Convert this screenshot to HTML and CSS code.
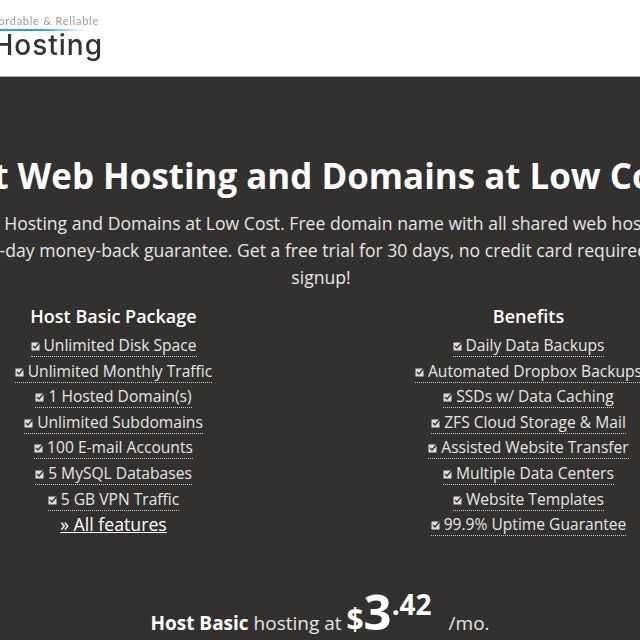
FILE: index.html
```html
<!DOCTYPE html>
<html lang="en">
<head>
    <meta charset="UTF-8">
    <meta name="viewport" content="width=device-width, initial-scale=1.0">
    <title>Web Hosting and Domains at Low Cost</title>
    <link rel="stylesheet" href="styles.css">
</head>
<body>

<header class="site-header">
    <div class="logo">
        <span class="logo-tag">Affordable &amp; Reliable</span>
        <span class="logo-line"></span>
        <span class="logo-name">Hosting</span>
    </div>
</header>

<main class="main">
    <div class="wrap">
        <h1>Best Web Hosting and Domains at Low Cost</h1>
        <p class="intro">
            Best Web Hosting and Domains at Low Cost. Free domain name with all shared web hosting plans.<br>
            30-day money-back guarantee. Get a free trial for 30 days, no credit card required at
            <span class="intro-end">signup!</span>
        </p>

        <div class="packages">
            <section class="package">
                <h3>Host Basic Package</h3>
                <ul>
                    <li><span class="item"><svg class="tick" viewBox="0 0 10 10"><rect x="0.5" y="1.5" width="8" height="8" fill="#ddd"/><path d="M2 5l2 2 5-6" fill="none" stroke="#333" stroke-width="1.4"/></svg>Unlimited Disk Space</span></li>
                    <li><span class="item"><svg class="tick" viewBox="0 0 10 10"><rect x="0.5" y="1.5" width="8" height="8" fill="#ddd"/><path d="M2 5l2 2 5-6" fill="none" stroke="#333" stroke-width="1.4"/></svg>Unlimited Monthly Traffic</span></li>
                    <li><span class="item"><svg class="tick" viewBox="0 0 10 10"><rect x="0.5" y="1.5" width="8" height="8" fill="#ddd"/><path d="M2 5l2 2 5-6" fill="none" stroke="#333" stroke-width="1.4"/></svg>1 Hosted Domain(s)</span></li>
                    <li><span class="item"><svg class="tick" viewBox="0 0 10 10"><rect x="0.5" y="1.5" width="8" height="8" fill="#ddd"/><path d="M2 5l2 2 5-6" fill="none" stroke="#333" stroke-width="1.4"/></svg>Unlimited Subdomains</span></li>
                    <li><span class="item"><svg class="tick" viewBox="0 0 10 10"><rect x="0.5" y="1.5" width="8" height="8" fill="#ddd"/><path d="M2 5l2 2 5-6" fill="none" stroke="#333" stroke-width="1.4"/></svg>100 E-mail Accounts</span></li>
                    <li><span class="item"><svg class="tick" viewBox="0 0 10 10"><rect x="0.5" y="1.5" width="8" height="8" fill="#ddd"/><path d="M2 5l2 2 5-6" fill="none" stroke="#333" stroke-width="1.4"/></svg>5 MySQL Databases</span></li>
                    <li><span class="item"><svg class="tick" viewBox="0 0 10 10"><rect x="0.5" y="1.5" width="8" height="8" fill="#ddd"/><path d="M2 5l2 2 5-6" fill="none" stroke="#333" stroke-width="1.4"/></svg>5 GB VPN Traffic</span></li>
                    <li><a class="all-features" href="#">» All features</a></li>
                </ul>
            </section>
            <section class="package">
                <h3>Benefits</h3>
                <ul>
                    <li><span class="item"><svg class="tick" viewBox="0 0 10 10"><rect x="0.5" y="1.5" width="8" height="8" fill="#ddd"/><path d="M2 5l2 2 5-6" fill="none" stroke="#333" stroke-width="1.4"/></svg>Daily Data Backups</span></li>
                    <li><span class="item"><svg class="tick" viewBox="0 0 10 10"><rect x="0.5" y="1.5" width="8" height="8" fill="#ddd"/><path d="M2 5l2 2 5-6" fill="none" stroke="#333" stroke-width="1.4"/></svg>Automated Dropbox Backups</span></li>
                    <li><span class="item"><svg class="tick" viewBox="0 0 10 10"><rect x="0.5" y="1.5" width="8" height="8" fill="#ddd"/><path d="M2 5l2 2 5-6" fill="none" stroke="#333" stroke-width="1.4"/></svg>SSDs w/ Data Caching</span></li>
                    <li><span class="item"><svg class="tick" viewBox="0 0 10 10"><rect x="0.5" y="1.5" width="8" height="8" fill="#ddd"/><path d="M2 5l2 2 5-6" fill="none" stroke="#333" stroke-width="1.4"/></svg>ZFS Cloud Storage &amp; Mail</span></li>
                    <li><span class="item"><svg class="tick" viewBox="0 0 10 10"><rect x="0.5" y="1.5" width="8" height="8" fill="#ddd"/><path d="M2 5l2 2 5-6" fill="none" stroke="#333" stroke-width="1.4"/></svg>Assisted Website Transfer</span></li>
                    <li><span class="item"><svg class="tick" viewBox="0 0 10 10"><rect x="0.5" y="1.5" width="8" height="8" fill="#ddd"/><path d="M2 5l2 2 5-6" fill="none" stroke="#333" stroke-width="1.4"/></svg>Multiple Data Centers</span></li>
                    <li><span class="item"><svg class="tick" viewBox="0 0 10 10"><rect x="0.5" y="1.5" width="8" height="8" fill="#ddd"/><path d="M2 5l2 2 5-6" fill="none" stroke="#333" stroke-width="1.4"/></svg>Website Templates</span></li>
                    <li><span class="item"><svg class="tick" viewBox="0 0 10 10"><rect x="0.5" y="1.5" width="8" height="8" fill="#ddd"/><path d="M2 5l2 2 5-6" fill="none" stroke="#333" stroke-width="1.4"/></svg>99.9% Uptime Guarantee</span></li>
                </ul>
            </section>
        </div>

        <p class="price-line"><strong>Host Basic</strong> hosting at <span class="price"><b class="dollar">$</b><b class="whole">3</b><b class="cents">.42</b></span> /mo.</p>
    </div>
</main>

</body>
</html>
```

FILE: styles.css
```css
html, body {
    height: 100%;
}
body {
    margin: 0;
    font-family: "Open Sans", "Noto Sans", sans-serif;
    background-color: #323130;
    color: #e6e6e6;
    overflow: hidden;
    display: flex;
    flex-direction: column;
}
.site-header {
    height: 76px;
    flex-shrink: 0;
    background: #fff;
    border-bottom: 1px solid #aaa;
}
.logo {
    width: 103px;
    height: 76px;
    overflow: hidden;
    display: flex;
    flex-direction: column;
    align-items: flex-end;
    padding-top: 13px;
    box-sizing: border-box;
    filter: blur(0.4px);
}
.logo-tag {
    font-family: Lato, sans-serif;
    font-size: 11px;
    line-height: 15px;
    letter-spacing: 0.75px;
    color: #999;
    white-space: nowrap;
    margin-right: 4px;
}
.logo-line {
    width: 85px;
    height: 2px;
    flex-shrink: 0;
    margin: 1px 18px 0 0;
    background: linear-gradient(to right, #2a9fe8, #2a9fe8 50%, #fff);
}
.logo-name {
    font-family: Inter, sans-serif;
    font-size: 28px;
    font-weight: 500;
    line-height: 28px;
    letter-spacing: 1px;
    color: #333;
    white-space: nowrap;
}
.main {
    flex: 1;
    display: flex;
    justify-content: center;
}
.wrap {
    width: 830px;
    padding-left: 2px;
    flex-shrink: 0;
    text-align: center;
}
h1 {
    margin: 75px 0 0;
    padding-right: 24px;
    font-size: 34.9px;
    line-height: 48px;
    font-weight: 700;
    color: #fff;
    white-space: nowrap;
}
.intro {
    margin: 10px 0 0;
    padding-left: 6px;
    font-size: 17.6px;
    line-height: 27px;
    white-space: nowrap;
}
.intro-end {
    display: block;
    padding-right: 6px;
}
.packages {
    display: grid;
    grid-template-columns: 1fr 1fr;
    margin-top: 12px;
}
h3 {
    margin: 0;
    font-size: 18px;
    line-height: 26px;
    font-weight: 600;
    color: #fff;
}
ul {
    list-style: none;
    margin: 5px 0 0;
    padding: 0;
}
li {
    height: 25.6px;
    font-size: 15.6px;
    line-height: 22px;
}
.item {
    display: inline-block;
    border-bottom: 1px dotted #ccc;
    white-space: nowrap;
}
.tick {
    width: 10px;
    height: 10px;
    margin-right: 3px;
}
.all-features {
    font-size: 17.7px;
    color: #fff;
}
.price-line {
    margin: 43px 0 0;
    padding-right: 2px;
    font-size: 19px;
    line-height: 44px;
}
.price-line strong {
    font-weight: 700;
    color: #fff;
}
.price b {
    color: #fff;
    font-weight: 700;
}
.dollar {
    font-size: 30px;
}
.whole {
    font-size: 49px;
}
.cents {
    font-size: 28px;
    vertical-align: 15px;
    margin-right: 12px;
}
```
